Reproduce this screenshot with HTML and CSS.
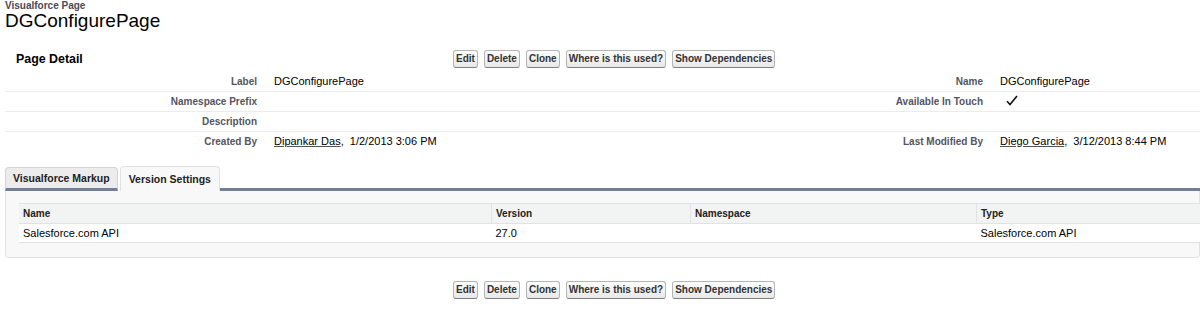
FILE: index.html
```html
<!DOCTYPE html>
<html lang="en">
<head>
  <meta charset="UTF-8">
  <title>DGConfigurePage ~ Visualforce Page</title>
  <link rel="stylesheet" href="styles.css">
</head>
<body>
  <div class="page-head">
    <div class="page-type">Visualforce Page</div>
    <h1>DGConfigurePage</h1>
  </div>

  <div class="block-head">
    <h2>Page Detail</h2>
    <div class="btns">
      <button>Edit</button>
      <button>Delete</button>
      <button>Clone</button>
      <button>Where is this used?</button>
      <button>Show Dependencies</button>
    </div>
  </div>

  <div class="detail-list">
    <div class="lbl">Label</div>
    <div class="val">DGConfigurePage</div>
    <div class="lbl">Name</div>
    <div class="val">DGConfigurePage</div>

    <div class="lbl">Namespace Prefix</div>
    <div class="val"></div>
    <div class="lbl">Available In Touch</div>
    <div class="val">
      <svg class="check" width="12" height="11" viewBox="0 0 12 11"><path d="M1 6.2 L4 9.5 L11 1" fill="none" stroke="#111" stroke-width="1.6"/></svg>
    </div>

    <div class="lbl">Description</div>
    <div class="val"></div>
    <div class="lbl"></div>
    <div class="val"></div>

    <div class="lbl last">Created By</div>
    <div class="val last"><a href="#">Dipankar Das</a>, &nbsp;1/2/2013 3:06 PM</div>
    <div class="lbl last">Last Modified By</div>
    <div class="val last"><a href="#">Diego Garcia</a>, &nbsp;3/12/2013 8:44 PM</div>
  </div>

  <div class="tabs">
    <div class="tab">Visualforce Markup</div>
    <div class="tab active">Version Settings</div>
    <div class="tab-fill"></div>
  </div>
  <div class="tab-panel">
    <table class="list">
      <tr>
        <th class="c-name">Name</th>
        <th class="c-ver">Version</th>
        <th class="c-ns">Namespace</th>
        <th>Type</th>
      </tr>
      <tr>
        <td>Salesforce.com API</td>
        <td>27.0</td>
        <td></td>
        <td>Salesforce.com API</td>
      </tr>
    </table>
  </div>

  <div class="btns bottom">
    <button>Edit</button>
    <button>Delete</button>
    <button>Clone</button>
    <button>Where is this used?</button>
    <button>Show Dependencies</button>
  </div>
</body>
</html>
```

FILE: styles.css
```css
body {
  margin: 0;
  font-family: "Liberation Sans", Arial, sans-serif;
  color: #000;
  background: #fff;
  width: 1200px;
  overflow: hidden;
}

.page-head {
  padding: 1px 5px 0;
}

.page-type {
  font-size: 10px;
  font-weight: bold;
  line-height: 9px;
  color: #4a4a56;
}

h1 {
  margin: 0;
  font-size: 19px;
  font-weight: normal;
  line-height: 22px;
}

.block-head {
  display: flex;
  align-items: center;
  height: 23px;
  margin-top: 15px;
}

h2 {
  margin: 0;
  width: 437px;
  padding-left: 16px;
  font-size: 12.4px;
  font-weight: bold;
}

.btns {
  display: flex;
  gap: 6px;
}

.btns.bottom {
  padding-left: 453px;
  margin-top: 23px;
}

button {
  font-family: "Liberation Sans", Arial, sans-serif;
  font-size: 10px;
  font-weight: bold;
  color: #333;
  line-height: 14px;
  height: 18px;
  padding: 1px 2px;
  border: 1px solid #b5b5b5;
  border-bottom-color: #7f7f7f;
  border-radius: 3px;
  background: linear-gradient(#fdfdfd, #e8e8e9);
}

.detail-list {
  display: grid;
  grid-template-columns: 257px 721px 0 1fr;
  margin: 2px 0 0 5px;
}

.detail-list > div {
  height: 19px;
  line-height: 19px;
  border-bottom: 1px solid #ececec;
}

.detail-list > div.last {
  border-bottom: none;
}

.lbl {
  text-align: right;
  padding-right: 5px;
  font-size: 10px;
  font-weight: bold;
  color: #55555f;
}

.val {
  padding-left: 12px;
  font-size: 11px;
  white-space: nowrap;
}

.detail-list .lbl:nth-child(4n+3) {
  padding-right: 0;
  direction: rtl;
  white-space: nowrap;
}

.detail-list .val:nth-child(4n) {
  padding-left: 17px;
}

.val a {
  color: #000;
  text-decoration: underline;
  text-decoration-color: #555;
}

.check {
  vertical-align: -1px;
  margin-left: 6px;
}

.tabs {
  display: flex;
  align-items: flex-end;
  margin: 15px 0 0 5px;
  height: 25px;
}

.tab {
  font-size: 10.5px;
  font-weight: bold;
  color: #222;
  padding: 0 7px;
  height: 20px;
  line-height: 21px;
  background: #ececec;
  border: 1px solid #d4d4d4;
  border-bottom: 3px solid #747e96;
  border-radius: 4px 4px 0 0;
}

.tab.active {
  height: 24px;
  line-height: 24px;
  margin-left: 2px;
  padding: 0 8px;
  background: #f8f8f8;
  border-color: #e0e3e5;
  border-bottom: none;
}

.tab-fill {
  flex: 1;
  border-bottom: 3px solid #747e96;
}

.tab-panel {
  margin-left: 5px;
  padding: 12px 0 14px 13px;
  background: #f8f8f8;
  border: 1px solid #e0e3e5;
  border-top: none;
  border-radius: 0 0 4px 4px;
}

.list {
  width: 1200px;
  border-collapse: collapse;
  background: #fff;
  font-size: 11px;
}

.list th {
  height: 19px;
  padding: 0 4px;
  text-align: left;
  font-size: 10px;
  font-weight: bold;
  color: #222;
  background: #f2f3f3;
  border-top: 1px solid #e0e3e5;
  border-bottom: 1px solid #e0e3e5;
  border-left: 1px solid #e0e3e5;
}

.list th:first-child {
  border-left: none;
}

.list td {
  height: 18px;
  padding: 0 4px;
  border-bottom: 1px solid #e0e3e5;
}

.c-name {
  width: 464px;
}

.c-ver {
  width: 190px;
}

.c-ns {
  width: 277px;
}
```
